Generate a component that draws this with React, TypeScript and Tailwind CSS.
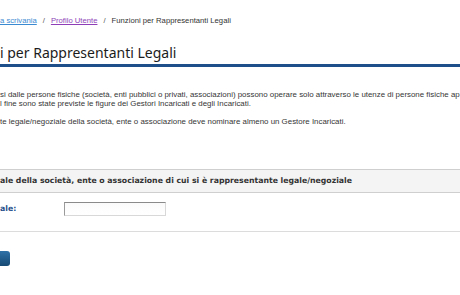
export default function App() {
  return (
    <div className="w-[460px] h-[295px] overflow-hidden bg-white text-[#333] font-['Liberation_Sans',Arial,sans-serif]">
      {/* breadcrumb */}
      <div className="pt-[16px] h-[25px] flex items-center whitespace-nowrap text-[7.7px] leading-[10px]">
        <a href="#" className="text-[#3a8ad2] underline">a scrivania</a>
        <span className="mx-[6px] text-[#555]">/</span>
        <a href="#" className="text-[#8e3fb8] underline">Profilo Utente</a>
        <span className="mx-[6px] text-[#555]">/</span>
        <span className="text-[#333]">Funzioni per Rappresentanti Legali</span>
      </div>

      {/* title */}
      <div className="mt-[17px] h-[22px] flex items-center whitespace-nowrap font-['Noto_Sans',sans-serif] text-[14px] leading-[18px] text-[#1c1c1c]">
        i per Rappresentanti Legali
      </div>
      <div className="h-[3px] bg-[#1f4f8a]" />

      {/* paragraphs */}
      <div className="mt-[23px] text-[7.9px] leading-[9px] text-[#363636] whitespace-nowrap overflow-hidden">
        <p>si dalle persone fisiche (società, enti pubblici o privati, associazioni) possono operare solo attraverso le utenze di persone fisiche ap</p>
        <p>l fine sono state previste le figure dei Gestori Incaricati e degli Incaricati.</p>
        <p className="mt-[9px]">te legale/negoziale della società, ente o associazione deve nominare almeno un Gestore Incaricati.</p>
      </div>

      {/* section header */}
      <div className="mt-[43px] h-[24px] flex items-center border-y border-[#cfcfcf] bg-[#f4f4f4] whitespace-nowrap font-['DejaVu_Sans',Verdana,sans-serif] font-bold text-[7.75px] text-[#333]">
        ale della società, ente o associazione di cui si è rappresentante legale/negoziale
      </div>

      {/* form row */}
      <div className="mt-[9px] h-[14px] flex items-center">
        <label className="w-[64px] font-['DejaVu_Sans',Verdana,sans-serif] font-bold text-[7.75px] text-[#1f4f8a]">ale:</label>
        <input
          type="text"
          className="w-[102px] h-[14px] border border-t-[#8a8a8a] border-l-[#9a9a9a] border-r-[#d8d8d8] border-b-[#d8d8d8] bg-gradient-to-b from-[#fafafa] to-white outline-none"
        />
      </div>

      <div className="mt-[15px] h-px bg-[#dcdcdc]" />

      {/* button */}
      <div className="mt-[19px] flex">
        <button className="-ml-[20px] w-[30px] h-[15px] rounded-[3px] bg-gradient-to-b from-[#2f72a8] to-[#174a74]" />
      </div>
    </div>
  );
}
